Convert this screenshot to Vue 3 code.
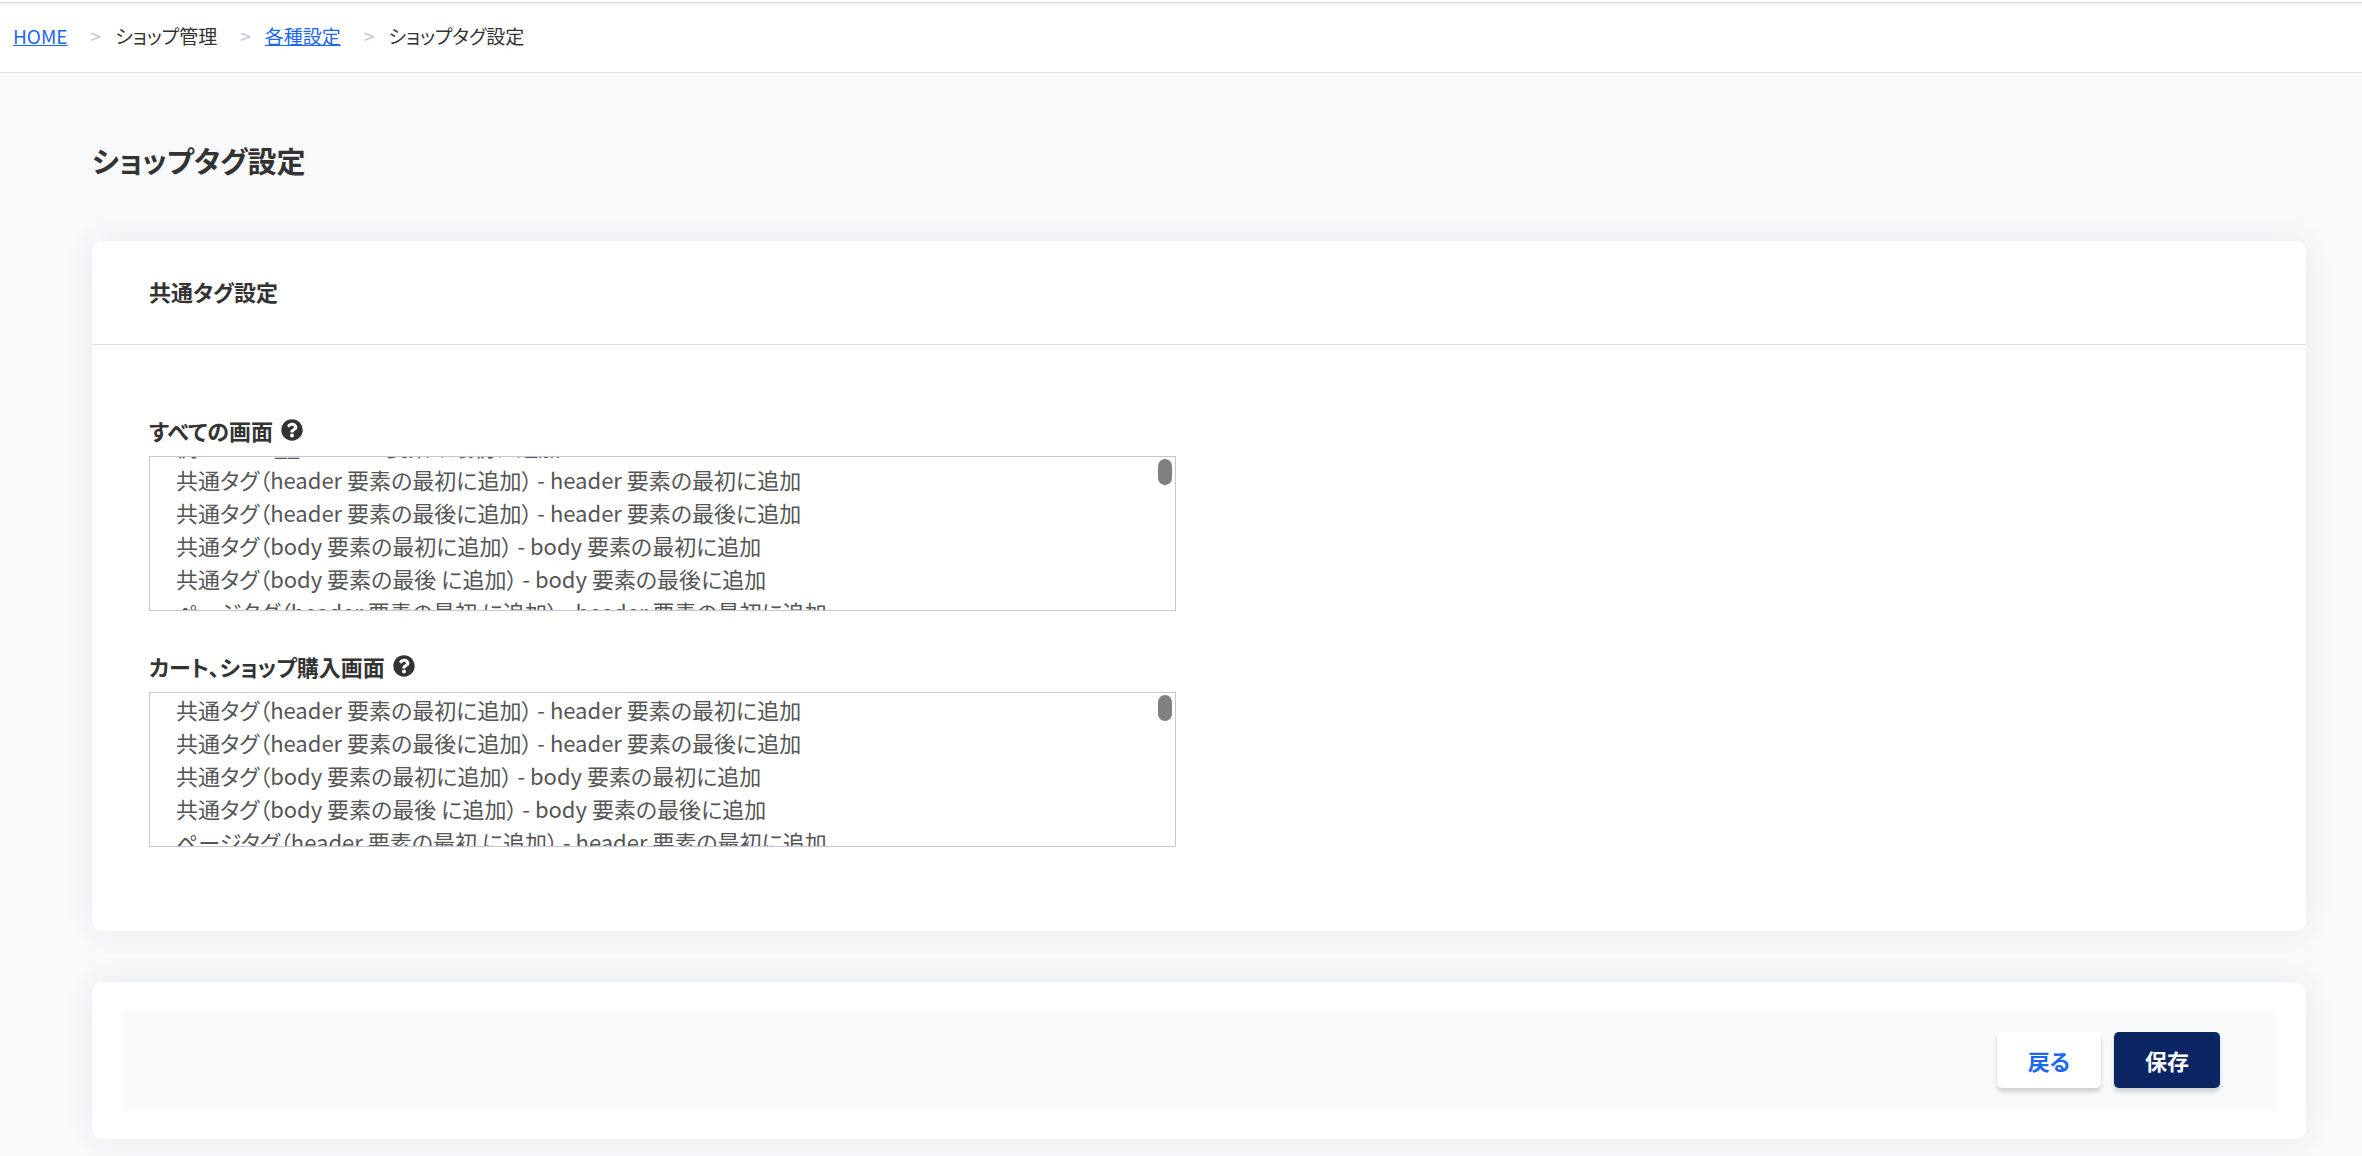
<script setup>
import { onMounted, ref } from 'vue'

const crumbs = [
  { label: 'HOME', href: '#' },
  { label: 'ショップ管理' },
  { label: '各種設定', href: '#' },
  { label: 'ショップタグ設定' }
]

const tags = [
  '例 header__header   要素の最初に追加',
  '共通タグ（header 要素の最初に追加） - header 要素の最初に追加',
  '共通タグ（header 要素の最後に追加） - header 要素の最後に追加',
  '共通タグ（body 要素の最初に追加） - body 要素の最初に追加',
  '共通タグ（body 要素の最後 に追加） - body 要素の最後に追加',
  'ページタグ（header 要素の最初 に追加） - header 要素の最初に追加',
  ''
].join('\n')

const fields = ref([
  { id: 'all', label: 'すべての画面', value: tags, scroll: 35 },
  { id: 'cart', label: 'カート、ショップ購入画面', value: tags, scroll: 41 }
])

onMounted(() => {
  fields.value.forEach((f) => {
    document.getElementById(f.id).scrollTop = f.scroll
  })
})
</script>

<template>
  <div class="page">
    <nav class="crumbs" aria-label="breadcrumb">
      <ol>
        <li v-for="c in crumbs" :key="c.label">
          <a v-if="c.href" :href="c.href">{{ c.label }}</a>
          <span v-else>{{ c.label }}</span>
        </li>
      </ol>
    </nav>
    <main>
      <h1>ショップタグ設定</h1>
      <section class="card">
        <h2>共通タグ設定</h2>
        <div class="body">
          <div v-for="f in fields" :key="f.id" class="field">
            <div class="label">
              <label :for="f.id">{{ f.label }}</label>
              <svg viewBox="0 0 512 512" aria-hidden="true">
                <path d="M504 256c0 136.997-111.043 248-248 248S8 392.997 8 256C8 119.083 119.043 8 256 8s248 111.083 248 248zM262.655 90c-54.497 0-89.255 22.957-116.549 63.758-3.536 5.286-2.353 12.415 2.715 16.258l34.699 26.31c5.205 3.947 12.621 3.008 16.665-2.122 17.864-22.658 30.113-35.797 57.303-35.797 20.429 0 45.698 13.148 45.698 32.958 0 14.976-12.363 22.667-32.534 33.976C247.128 238.528 216 254.941 216 296v4c0 6.627 5.373 12 12 12h56c6.627 0 12-5.373 12-12v-1.333c0-28.462 83.186-29.647 83.186-106.667 0-58.002-60.165-102-116.531-102zM256 338c-25.365 0-46 20.635-46 46 0 25.364 20.635 46 46 46s46-20.636 46-46c0-25.365-20.635-46-46-46z" />
              </svg>
            </div>
            <div class="box">
              <textarea :id="f.id" v-model="f.value" spellcheck="false" wrap="off"></textarea>
              <span class="thumb"></span>
            </div>
          </div>
        </div>
      </section>
      <section class="card actions">
        <div class="bar">
          <button type="button" class="back">戻る</button>
          <button type="button" class="save">保存</button>
        </div>
      </section>
    </main>
  </div>
</template>

<style>
body {
  background: #f8f9fb;
}
</style>

<style scoped>
.page {
  padding-top: 2px;
  background: linear-gradient(#fff 2px, transparent 2px);
  color: #333;
  font-family: "Noto Sans CJK JP", sans-serif;
  font-feature-settings: "palt";
}
.crumbs {
  background: linear-gradient(#f1f1f2, #fff 3px);
  border-top: 1px solid #dcdcde;
  border-bottom: 1px solid #e0e1ea;
  padding: 18px 13px 21px;
}
.crumbs ol {
  display: flex;
  list-style: none;
  margin: 0;
  padding: 0;
  font-size: 19px;
  line-height: 30px;
}
.crumbs li + li::before {
  content: ">";
  color: #c5c6da;
  margin: 0 14px 0 23px;
}
a {
  color: #1b66f5;
}
main {
  padding: 63px 56px 18px 92px;
}
h1 {
  margin: 0 0 57px;
  font-size: 29px;
  line-height: 48px;
}
.card {
  background: #fff;
  border-radius: 10px;
  box-shadow: 0 0 30px rgba(8, 60, 80, 0.08);
}
h2 {
  margin: 0;
  padding: 34px 57px 37px;
  font-size: 22px;
  line-height: 32px;
  border-bottom: 1px solid #dedede;
}
.body {
  display: flex;
  flex-direction: column;
  gap: 39px;
  padding: 69px 57px 84px;
}
.label {
  display: flex;
  align-items: center;
  gap: 8px;
  height: 32px;
  margin-bottom: 10px;
  font-size: 22px;
  font-weight: 700;
}
.label svg {
  width: 22px;
  height: 22px;
  fill: #333;
}
.box {
  position: relative;
  width: calc(50% - 23px);
}
textarea {
  display: block;
  box-sizing: border-box;
  width: 100%;
  height: 155px;
  padding: 8px 26px;
  border: 1px solid #c5c6da;
  background: #fff;
  color: #555;
  font: 22px/33px "Noto Sans CJK JP", sans-serif;
  font-feature-settings: "palt";
  resize: none;
  overflow: hidden;
  outline: 0;
}
.thumb {
  position: absolute;
  top: 3px;
  right: 4px;
  width: 14px;
  height: 26px;
  border-radius: 7px;
  background: #808080;
}
.actions {
  margin-top: 51px;
  padding: 29px 31px;
}
.bar {
  display: flex;
  justify-content: flex-end;
  gap: 13px;
  padding: 21px 55px 22px;
  background: #f8f9fb;
}
button {
  height: 56px;
  padding: 0 31px 1px;
  border: 0;
  border-radius: 5px;
  background: #fff;
  color: #1b66f5;
  box-shadow: 0 4px 4px rgba(0, 0, 0, 0.16);
  font: 700 22px/32px "Noto Sans CJK JP", sans-serif;
  font-feature-settings: "palt";
}
.save {
  background: #0b2663;
  color: #fff;
}
</style>
